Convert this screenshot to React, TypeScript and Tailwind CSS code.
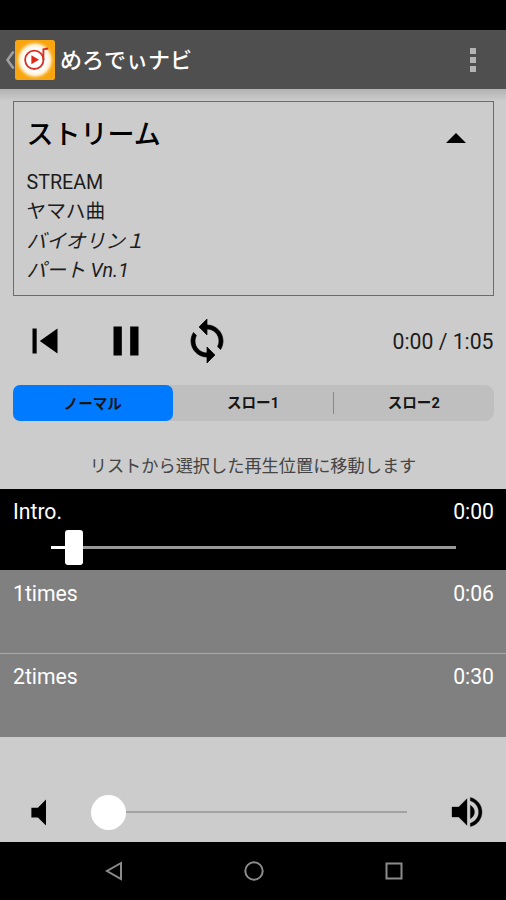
import React from "react";

type IconProps = { d: string; className: string };

function Icon({ d, className }: IconProps) {
  return (
    <svg viewBox="0 0 24 24" fill="currentColor" className={`block shrink-0 ${className}`}>
      <path d={d} />
    </svg>
  );
}

const PREVIOUS = "M6 6h2v12H6zm3.5 6l8.5 6V6z";
const PAUSE = "M6 19h4V5H6v14zm8-14v14h4V5h-4z";
const LOOP =
  "M12 4V1L8 5l4 4V6c3.31 0 6 2.69 6 6 0 1.01-.25 1.97-.7 2.8l1.46 1.46C19.54 15.03 20 13.57 20 12c0-4.42-3.58-8-8-8zm0 14c-3.31 0-6-2.69-6-6 0-1.01.25-1.97.7-2.8L5.24 7.74C4.46 8.97 4 10.43 4 12c0 4.42 3.58 8 8 8v3l4-4-4-4v3z";
const VOLUME_MUTE = "M7 9v6h4l5 5V4l-5 5H7z";
const VOLUME_UP =
  "M3 9v6h4l5 5V4L7 9H3zm13.5 3c0-1.77-1.02-3.29-2.5-4.03v8.05c1.48-.73 2.5-2.25 2.5-4.02zM14 3.23v2.06c2.89.86 5 3.54 5 6.71s-2.11 5.85-5 6.71v2.06c4.01-.91 7-4.49 7-8.77s-2.99-7.86-7-8.77z";

function AppBar() {
  return (
    <header className="flex h-[59px] items-center bg-[#4f4f4f] pl-[5px] pr-[30px] text-white">
      <svg viewBox="0 0 10 20" className="block h-5 w-2.5 shrink-0" fill="none" stroke="#a0a0a0" strokeWidth="2.6">
        <path d="M8.5 1.5L2.5 10l6 8.5" />
      </svg>
      <svg viewBox="0 0 40 40" className="block size-10 shrink-0">
        <defs>
          <radialGradient id="glow">
            <stop offset="0.58" stopColor="#fff" />
            <stop offset="0.76" stopColor="#ffeecb" />
            <stop offset="1" stopColor="#f8a510" stopOpacity="0" />
          </radialGradient>
        </defs>
        <rect width="40" height="40" rx="2.5" fill="#f8a510" />
        <circle cx="20" cy="20" r="20" fill="url(#glow)" />
        <circle cx="19.3" cy="19.8" r="9.2" fill="none" stroke="#d8301e" strokeWidth="1.8" />
        <path d="M28.4 20V9.3l4.8-.8" fill="none" stroke="#d8301e" strokeWidth="1.9" />
        <path d="M16.4 15.3v9L24 19.8z" fill="#dc2c18" />
      </svg>
      <h1 className="ml-[5px] mt-0.5 text-[22px] font-medium leading-[30px]">めろでぃナビ</h1>
      <div className="ml-auto flex flex-col gap-[3px]">
        <i className="h-1.5 w-[6.5px] bg-[#b4b4b4]" />
        <i className="h-1.5 w-[6.5px] bg-[#b4b4b4]" />
        <i className="h-1.5 w-[6.5px] bg-[#b4b4b4]" />
      </div>
    </header>
  );
}

function SongCard() {
  return (
    <section className="h-[195px] border border-[#6c6c6c] pl-[13px] pr-[27px] pt-[13px]">
      <div className="flex h-10 items-center justify-between">
        <h2 className="text-[27px] font-medium leading-10">ストリーム</h2>
        <svg viewBox="0 0 20 10" className="mt-1.5 block h-2.5 w-5">
          <path d="M0 10L10 0l10 10z" />
        </svg>
      </div>
      <div className="mt-[13px] text-[19.7px] leading-[29.4px] text-[#1c1c1c]">
        <p>STREAM</p>
        <p>ヤマハ曲</p>
        <p className="italic">バイオリン１</p>
        <p className="italic">パート Vn.1</p>
      </div>
    </section>
  );
}

function Controls() {
  return (
    <div className="flex h-[89px] items-center pl-[7px]">
      <Icon d={PREVIOUS} className="size-[50px]" />
      <Icon d={PAUSE} className="ml-[31px] size-[50px]" />
      <Icon d={LOOP} className="ml-[32.5px] size-12 stroke-black stroke-[0.35]" />
      <span className="ml-auto mt-0.5 text-[21.2px] text-[#1c1c1c]">0:00 / 1:05</span>
    </div>
  );
}

function SpeedTabs() {
  return (
    <div className="flex h-9 items-center rounded-[9px] bg-[#bfbfbf] text-[14.6px] font-bold leading-[38px] text-[#161616]">
      <div className="h-9 w-[160.5px] rounded-[7px] bg-[#007aff] text-center">ノーマル</div>
      <div className="w-[160px] text-center">スロー1</div>
      <div className="h-[22px] w-px bg-[#888]" />
      <div className="flex-1 text-center">スロー2</div>
    </div>
  );
}

function Marker({ name, time }: { name: string; time: string }) {
  return (
    <div className="flex justify-between pl-[13px] pr-3 text-[21.2px] leading-[25px] text-white">
      <span>{name}</span>
      <span>{time}</span>
    </div>
  );
}

export default function App() {
  return (
    <div className="flex h-[900px] w-[506px] flex-col overflow-hidden bg-[#cccccc] font-[Roboto,'Noto_Sans_CJK_JP',sans-serif] text-black">
      <div className="h-[30px] shrink-0 bg-black" />
      <AppBar />
      <div className="h-3 shrink-0 bg-linear-to-b from-[#b2b2b2] to-[#cccccc]" />
      <main className="h-[388px] shrink-0 px-[12.5px]">
        <SongCard />
        <Controls />
        <SpeedTabs />
        <p className="mt-[32px] text-center text-[17.2px] leading-[26px] text-[#444]">
          リストから選択した再生位置に移動します
        </p>
      </main>
      <div className="h-[81px] shrink-0 bg-black pt-[10px]">
        <Marker name="Intro." time="0:00" />
        <div className="ml-[51px] mr-[50px] mt-[5px] flex h-[36px] items-center">
          <div className="h-[3px] w-[14px] bg-white" />
          <div className="h-[35px] w-[18px] rounded-[3px] bg-white" />
          <div className="h-[3px] flex-1 bg-[#989898]" />
        </div>
      </div>
      <div className="h-[84px] shrink-0 border-b border-[#aaaaaa] bg-[#808080] pt-[11px]">
        <Marker name="1times" time="0:06" />
      </div>
      <div className="h-[83px] shrink-0 bg-[#808080] pt-[10px]">
        <Marker name="2times" time="0:30" />
      </div>
      <div className="flex h-[105px] shrink-0 items-center pl-5 pr-[19px] pt-[45px]">
        <Icon d={VOLUME_MUTE} className="size-[39px]" />
        <div className="ml-[32px] size-[35px] rounded-full bg-white" />
        <div className="h-[2px] w-[281px] bg-[#a3a3a3]" />
        <Icon d={VOLUME_UP} className="ml-auto size-10 stroke-black stroke-[0.2]" />
      </div>
      <nav className="flex h-[58px] shrink-0 items-center justify-between bg-black pl-[104px] pr-[102px]">
        <svg viewBox="0 0 20 20" className="block size-5" fill="none" stroke="#8b8b8b" strokeWidth="2">
          <path d="M17 2L3 10l14 8z" />
        </svg>
        <svg viewBox="0 0 20 20" className="block size-5" fill="none" stroke="#8b8b8b" strokeWidth="2">
          <circle cx="10" cy="10" r="8.7" />
        </svg>
        <svg viewBox="0 0 20 20" className="block size-5" fill="none" stroke="#8b8b8b" strokeWidth="2">
          <path d="M2.5 2.5h15v15h-15z" />
        </svg>
      </nav>
    </div>
  );
}
